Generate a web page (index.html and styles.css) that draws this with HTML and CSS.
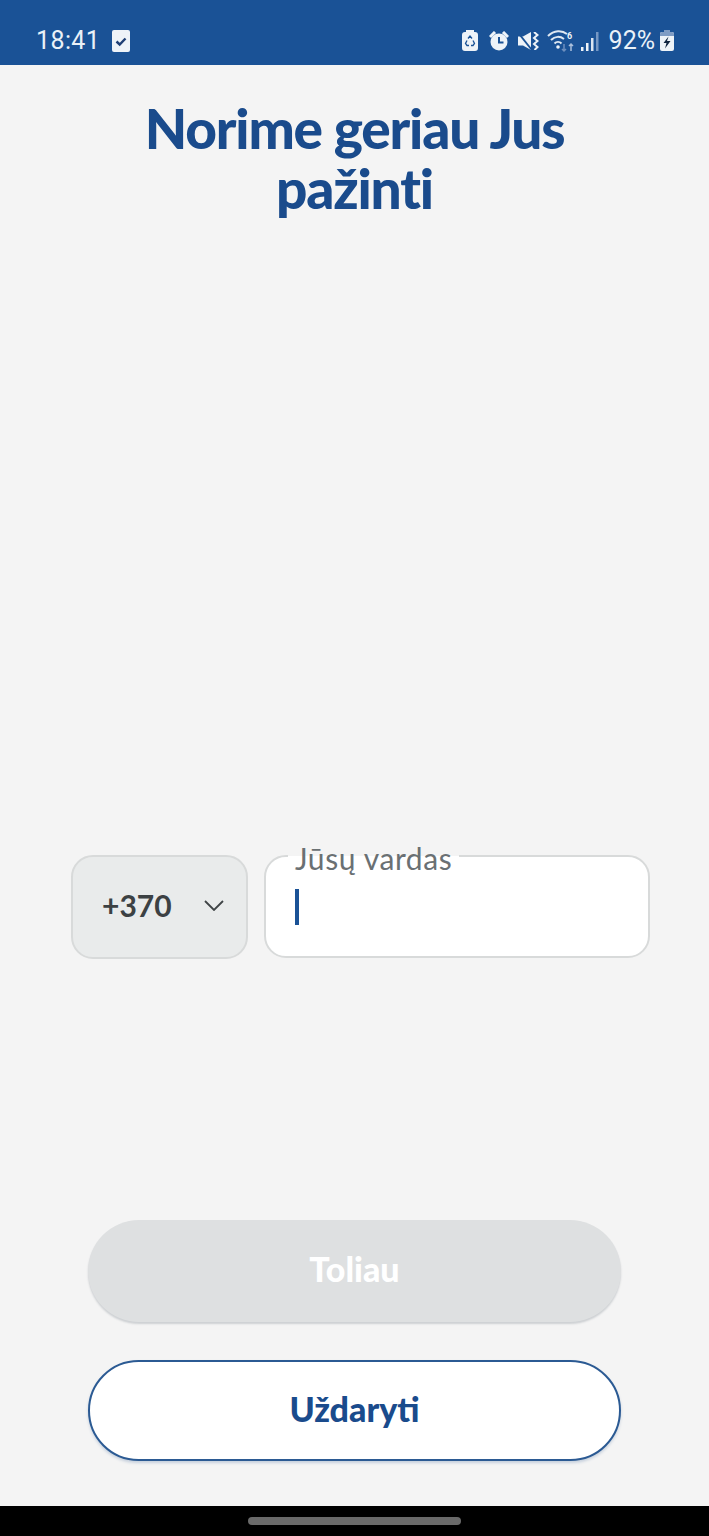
FILE: index.html
```html
<!DOCTYPE html>
<html lang="lt">
<head>
<meta charset="utf-8">
<title>Norime geriau Jus pažinti</title>
<link rel="stylesheet" href="styles.css">
</head>
<body>
<div class="app">
  <header class="status">
    <div class="status-left">
      <span class="time">18:41</span>
      <svg class="ico-check" viewBox="0 0 18 22" width="18" height="22"><rect x="0" y="0" width="18" height="22" rx="2" fill="#eef3f8"/><path d="M4.500 11.500l3.200 3 5.800-6" fill="none" stroke="#1f3f75" stroke-width="2.400"/></svg>
    </div>
    <div class="status-right">
      <svg class="ico-recycle" width="16" height="21" viewBox="0 0 16 21"><path d="M4 0h8v2h1a3 3 0 0 1 3 3v13a3 3 0 0 1-3 3H3a3 3 0 0 1-3-3V5a3 3 0 0 1 3-3h1z" fill="#eef3f8"/><path d="M6 8.500L8 6l2 2.500M11 10.500l1.500 3-1.500 2H9M7 15.500H5l-1.500-2 1.500-3" fill="none" stroke="#1a5296" stroke-width="1.300"/></svg>
      <svg width="20" height="20" viewBox="0 0 20 20"><circle cx="10" cy="11" r="8.500" fill="#eef3f8"/><path d="M1 6l5-5M19 6l-5-5" stroke="#eef3f8" stroke-width="3" fill="none"/><path d="M10 6v5.500h4.500" stroke="#1a5296" stroke-width="2" fill="none"/></svg>
      <svg class="ico-mute" width="21" height="18" viewBox="0 0 21 18"><path d="M0 4.500h5L13 0v18l-8-4.500H0z" fill="#eef3f8"/><path d="M0 0.500l13.500 17" stroke="#1a5296" stroke-width="1.800"/><path d="M16 0l3.500 3-3.500 3 3.500 3-3.500 3 3.500 3-3 3" fill="none" stroke="#eef3f8" stroke-width="2"/></svg>
      <svg class="ico-wifi" width="29" height="24" viewBox="0 0 29 24"><path d="M1 7c6-6 14-6 19-2M4 11c4-4 9-4 13-1M7.500 14.500c2-2 5-2 7 0" fill="none" stroke="#dfe8f2" stroke-width="2"/><circle cx="11" cy="18" r="1.800" fill="#eef3f8"/><text x="20" y="10" class="wifi-six">6</text><path d="M17 15v7M15 20l2 2 2-2" stroke="#6d8fbe" stroke-width="1.500" fill="none"/><path d="M24 22v-7M22 17l2-2 2 2" stroke="#a9bfdc" stroke-width="1.500" fill="none"/></svg>
      <svg width="20" height="22" viewBox="0 0 20 22"><rect x="0" y="17" width="2.500" height="4" fill="#eef3f8"/><rect x="5" y="13" width="2.500" height="8" fill="#eef3f8"/><rect x="10" y="8" width="2.500" height="13" fill="#dbe5f1"/><rect x="15" y="2" width="2.500" height="19" fill="#7597c4"/></svg>
      <span class="pct">92%</span>
      <svg width="14" height="21" viewBox="0 0 14 21"><path d="M4 0h6v2h2a2 2 0 0 1 2 2v15a2 2 0 0 1-2 2H2a2 2 0 0 1-2-2V4a2 2 0 0 1 2-2h2z" fill="#eef3f8"/><path d="M0 4a2 2 0 0 1 2-2h2V0h6v2h2a2 2 0 0 1 2 2v2H0z" fill="#7f9cc4"/><path d="M8.500 6.500L3.500 13h3l-1.500 5.500 5.500-7.500H7z" fill="#10253f"/></svg>
    </div>
  </header>

  <main class="content">
    <h1 class="title">Norime geriau Jus<br>pažinti</h1>

    <div class="form-row">
      <div class="prefix">
        <span class="prefix-code">+370</span>
        <svg class="chev" width="20" height="11" viewBox="0 0 20 11"><path d="M1 1l9 9 9-9" fill="none" stroke="#3f4446" stroke-width="1.800"/></svg>
      </div>
      <div class="field">
        <span class="field-label">Jūsų vardas</span>
        <span class="caret"></span>
      </div>
    </div>

    <div class="actions">
      <button class="btn btn-disabled" type="button">Toliau</button>
      <button class="btn btn-outline" type="button">Uždaryti</button>
    </div>
  </main>

  <footer class="navbar"><span class="home-pill"></span></footer>
</div>
</body>
</html>
```
FILE: styles.css
```css
* { box-sizing: border-box; }
html, body { margin: 0; padding: 0; }
body { width: 709px; height: 1536px; overflow: hidden; font-family: "Lato", "Liberation Sans", sans-serif; background: #f4f4f4; }
.app { display: flex; flex-direction: column; width: 709px; height: 1536px; }

.status { flex: 0 0 65px; background: #1a5296; color: #eaf1f8; display: flex; justify-content: space-between; align-items: center; padding: 16px 35px 0 36px; }
.status-left { display: flex; align-items: center; gap: 12px; }
.status-right { display: flex; align-items: center; gap: 9px; }
.time { font: 400 25px/30px "Roboto", sans-serif; letter-spacing: 0.4px; }
.pct { font: 400 25px/30px "Roboto", sans-serif; margin-left: -1px; margin-right: -4px; }
.wifi-six { font: 700 9px "Roboto", sans-serif; fill: #eef3f8; }
.ico-recycle { margin-right: 2px; }
.ico-mute { margin-right: -1px; }
.ico-wifi { margin-right: -4px; }

.content { flex: 1; display: flex; flex-direction: column; }
.title { margin: 33px 0 0; text-align: center; color: #1a4b8c; font: 900 55px/60px "Lato", sans-serif; letter-spacing: -1.200px; }

.form-row { display: flex; gap: 16px; margin: 637px 59px 0 71px; height: 104px; }
.prefix { flex: 0 0 177px; display: flex; align-items: center; padding-left: 29px; gap: 32px; background: #e9ebeb; border: 2px solid #d8dada; border-radius: 22px; }
.prefix-code { font: 700 30px/34px "Lato", sans-serif; color: #3c4143; margin-top: -4px; }
.chev { margin-top: -3px; }
.field { flex: 1; position: relative; height: 103px; background: #fff; border: 2px solid #d8dada; border-radius: 22px; }
.field-label { position: absolute; left: 22px; top: -15px; padding: 0 7px; background: linear-gradient(#f4f4f4 14px, #fff 14px); color: #6a7073; font: 400 30px/32px "Lato", sans-serif; letter-spacing: 0.600px; }
.caret { position: absolute; left: 29px; top: 32px; width: 4px; height: 36px; background: #1a5296; }

.actions { display: flex; flex-direction: column; gap: 38px; margin: 261px 88px 0; }
.btn { display: block; width: 100%; height: 102px; border-radius: 51px; font: 900 34px/40px "Lato", sans-serif; padding: 0 0 4px; }
.btn-disabled { background: #dee0e1; border: 0; color: #fff; box-shadow: 0 2px 2px #cdd0d3; }
.btn-outline { height: 101px; background: #fff; border: 2px solid #2b5a93; color: #1a4b8c; box-shadow: 0 2px 3px #c6d0dd; }

.navbar { flex: 0 0 30px; background: #000; display: flex; justify-content: center; padding-top: 11px; }
.home-pill { width: 213px; height: 8px; border-radius: 4px; background: #6a6a6a; }
```
